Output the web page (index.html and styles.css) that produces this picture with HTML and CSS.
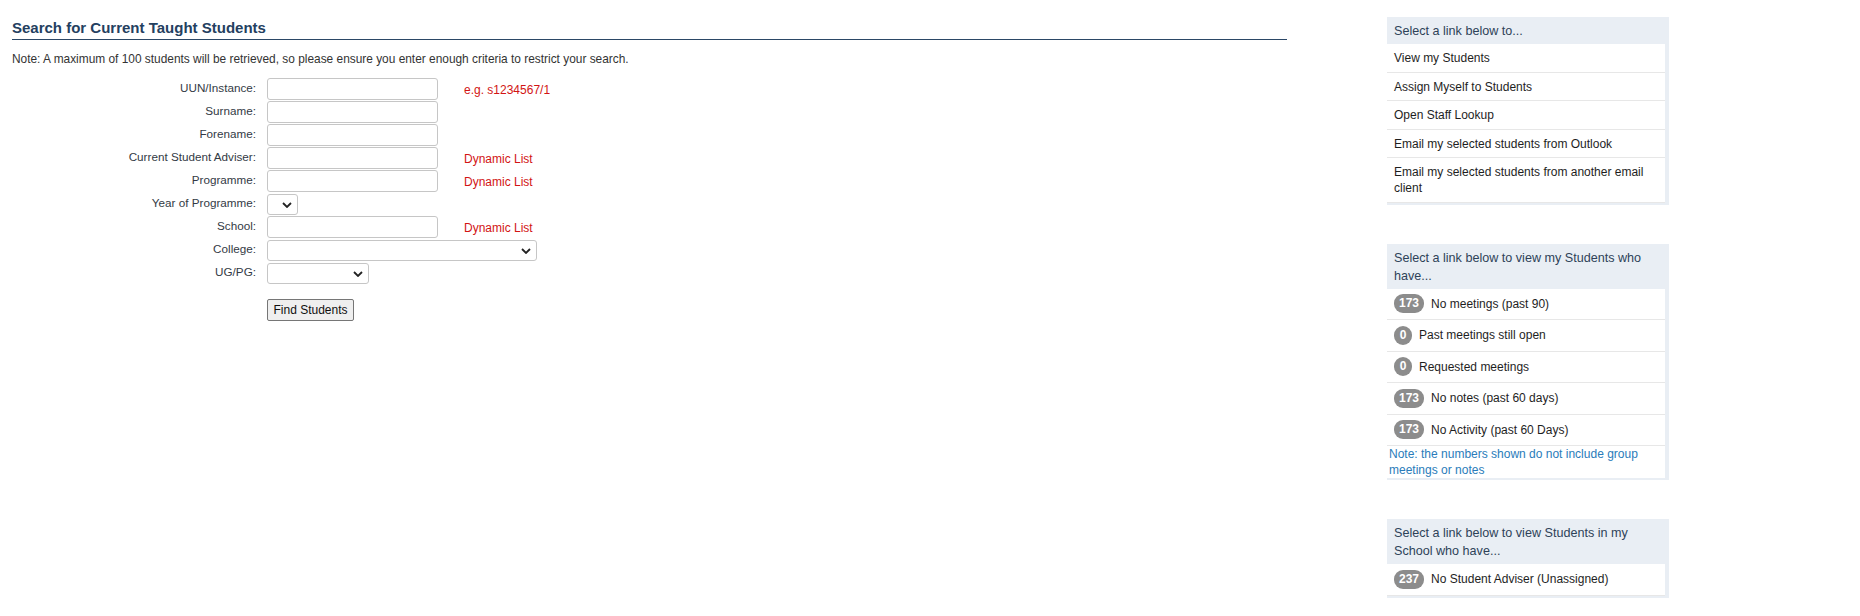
FILE: index.html
```html
<!DOCTYPE html>
<html lang="en">
<head>
<meta charset="utf-8">
<title>Search for Current Taught Students</title>
<link rel="stylesheet" href="styles.css">
</head>
<body>
<div class="page">
  <main class="main">
    <h2 class="title">Search for Current Taught Students</h2>
    <p class="note">Note: A maximum of 100 students will be retrieved, so please ensure you enter enough criteria to restrict your search.</p>
    <form class="form">
      <div class="row">
        <label class="lbl">UUN/Instance:</label>
        <input class="inp" type="text">
        <span class="hint">e.g. s1234567/1</span>
      </div>
      <div class="row">
        <label class="lbl">Surname:</label>
        <input class="inp" type="text">
      </div>
      <div class="row">
        <label class="lbl">Forename:</label>
        <input class="inp" type="text">
      </div>
      <div class="row">
        <label class="lbl">Current Student Adviser:</label>
        <input class="inp" type="text">
        <span class="hint">Dynamic List</span>
      </div>
      <div class="row">
        <label class="lbl">Programme:</label>
        <input class="inp" type="text">
        <span class="hint">Dynamic List</span>
      </div>
      <div class="row">
        <label class="lbl">Year of Programme:</label>
        <div class="sel sel-year">
          <select><option></option></select>
          <svg class="chev" viewBox="0 0 10 6" width="10" height="6"><path d="M1 1 L5 5 L9 1" fill="none" stroke="#222" stroke-width="1.8"/></svg>
        </div>
      </div>
      <div class="row">
        <label class="lbl">School:</label>
        <input class="inp" type="text">
        <span class="hint">Dynamic List</span>
      </div>
      <div class="row">
        <label class="lbl">College:</label>
        <div class="sel sel-college">
          <select><option></option></select>
          <svg class="chev" viewBox="0 0 10 6" width="10" height="6"><path d="M1 1 L5 5 L9 1" fill="none" stroke="#222" stroke-width="1.8"/></svg>
        </div>
      </div>
      <div class="row">
        <label class="lbl">UG/PG:</label>
        <div class="sel sel-ug">
          <select><option></option></select>
          <svg class="chev" viewBox="0 0 10 6" width="10" height="6"><path d="M1 1 L5 5 L9 1" fill="none" stroke="#222" stroke-width="1.8"/></svg>
        </div>
      </div>
      <div class="row row-btn">
        <span class="lbl"></span>
        <button type="button" class="btn">Find Students</button>
      </div>
    </form>
  </main>

  <aside class="side">
    <section class="panel">
      <div class="phead">Select a link below to...</div>
      <ul class="plist">
        <li class="pitem">View my Students</li>
        <li class="pitem">Assign Myself to Students</li>
        <li class="pitem">Open Staff Lookup</li>
        <li class="pitem">Email my selected students from Outlook</li>
        <li class="pitem">Email my selected students from another email client</li>
      </ul>
    </section>

    <section class="panel">
      <div class="phead">Select a link below to view my Students who have...</div>
      <ul class="plist">
        <li class="pitem bitem"><span class="badge">173</span>No meetings (past 90)</li>
        <li class="pitem bitem"><span class="badge">0</span>Past meetings still open</li>
        <li class="pitem bitem"><span class="badge">0</span>Requested meetings</li>
        <li class="pitem bitem"><span class="badge">173</span>No notes (past 60 days)</li>
        <li class="pitem bitem"><span class="badge">173</span>No Activity (past 60 Days)</li>
        <li class="pitem pnote">Note: the numbers shown do not include group meetings or notes</li>
      </ul>
    </section>

    <section class="panel">
      <div class="phead">Select a link below to view Students in my School who have...</div>
      <ul class="plist">
        <li class="pitem bitem"><span class="badge">237</span>No Student Adviser (Unassigned)</li>
      </ul>
    </section>
  </aside>
</div>
</body>
</html>
```

FILE: styles.css
```css
* { box-sizing: border-box; }

html, body {
  margin: 0;
  padding: 0;
  background: #ffffff;
}

body {
  font-family: "Liberation Sans", Arial, sans-serif;
  font-size: 12px;
  color: #333333;
}

.page {
  display: flex;
  align-items: flex-start;
  padding: 17px 0 0 12px;
}

.main {
  width: 1275px;
  flex: none;
}

.title {
  margin: 0;
  padding: 2px 0 3px 0;
  font-size: 15px;
  font-weight: bold;
  line-height: 17px;
  color: #24405f;
  border-bottom: 1px solid #2b4766;
}

.note {
  margin: 12px 0 0 0;
  line-height: 14px;
  font-size: 11.9px;
  color: #333333;
}

.form {
  margin-top: 12px;
}

.row {
  display: flex;
  align-items: flex-start;
  height: 23px;
}

.lbl {
  width: 244px;
  flex: none;
  text-align: right;
  padding-top: 3px;
  line-height: 14px;
  font-size: 11.7px;
  color: #333a45;
  margin-right: 11px;
}

.inp {
  width: 171px;
  height: 22px;
  flex: none;
  border: 1px solid #c6c6c6;
  border-radius: 3px;
  background: #ffffff;
  font: inherit;
  padding: 1px 4px;
  margin: 0;
}

.hint {
  margin-left: 26px;
  padding-top: 5px;
  line-height: 14px;
  color: #d21414;
}

.sel {
  position: relative;
  flex: none;
  height: 21px;
  margin-top: 1px;
}

.sel select {
  appearance: none;
  -webkit-appearance: none;
  display: block;
  width: 100%;
  height: 100%;
  border: 1px solid #c6c6c6;
  border-radius: 3px;
  background: #ffffff;
  font: inherit;
  margin: 0;
  padding: 0 4px;
}

.chev {
  position: absolute;
  right: 6px;
  top: 8px;
  pointer-events: none;
}

.sel-year { width: 31px; }
.sel-college { width: 270px; }
.sel-ug { width: 102px; }

.row-btn {
  margin-top: 14px;
  height: 22px;
}

.btn {
  width: 87px;
  height: 22px;
  margin: 0;
  padding: 0;
  border: 1px solid #767676;
  border-radius: 2px;
  background: #efefef;
  font: inherit;
  font-size: 12px;
  color: #111111;
}

/* Sidebar */
.side {
  width: 282px;
  flex: none;
  margin-left: 100px;
  display: flex;
  flex-direction: column;
  gap: 39px;
}

.panel {
  background: #e9eef4;
  padding: 0 4px 2px 0;
}

.phead {
  padding: 5px 7px 4px 7px;
  line-height: 18px;
  font-size: 12.6px;
  color: #2e4258;
}

.plist {
  list-style: none;
  margin: 0;
  padding: 0;
  background: #ffffff;
}

.pitem {
  padding: 6px 7px 5.5px 7px;
  line-height: 16px;
  color: #1e1e1e;
  border-bottom: 1px solid #e7e7e7;
}

.bitem {
  display: flex;
  align-items: center;
  gap: 7px;
  padding: 5.5px 7px;
  min-height: 31.5px;
}

.badge {
  display: inline-block;
  min-width: 18px;
  height: 19px;
  padding: 0 5px;
  border-radius: 9px;
  background: #8c8c8c;
  color: #ffffff;
  font-weight: bold;
  font-size: 12px;
  line-height: 19px;
  text-align: center;
}

.pnote {
  padding: 0 2px;
  line-height: 16px;
  color: #2a7cba;
  border-bottom: none;
}
```
